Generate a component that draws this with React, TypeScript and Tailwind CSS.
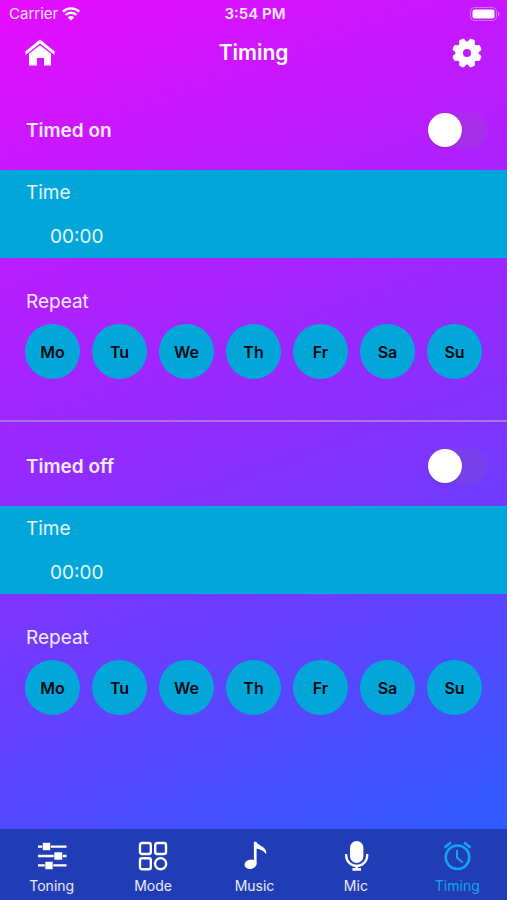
import React, { useState } from 'react';

const DAYS = ['Mo', 'Tu', 'We', 'Th', 'Fr', 'Sa', 'Su'];

const WifiIcon = () => (
  <svg width="18" height="14" viewBox="0 0 18 14" fill="none" stroke="#fff" strokeWidth="2.4" aria-hidden="true">
    <path d="M0.8 4.7a11.8 11.8 0 0 1 16.4 0" />
    <path d="M3.6 8a7.6 7.6 0 0 1 10.8 0" />
    <path d="M9 13.6L5.9 10.4a4.5 4.5 0 0 1 6.2 0z" fill="#fff" stroke="none" />
  </svg>
);

const BatteryIcon = () => (
  <svg width="31" height="14" viewBox="0 0 31 14" aria-hidden="true">
    <rect x="0.5" y="0.5" width="26" height="13" rx="4" fill="none" stroke="#fff" strokeOpacity="0.35" />
    <rect x="2.5" y="2.5" width="22" height="9" rx="2.2" fill="#fff" />
    <path d="M28.2 4.8c1.6.6 1.6 3.8 0 4.4z" fill="#fff" fillOpacity="0.5" />
  </svg>
);

const HomeIcon = () => (
  <svg width="30" height="28" viewBox="0 0 30 28" fill="currentColor" aria-hidden="true">
    <path d="M15 0.5L29.5 12.2V16L15 4.6L0.5 16V12.2z" />
    <path d="M15 6.2L26 14.8V26.5H19V19H12V26.5H4V14.8z" />
  </svg>
);

const GearIcon = () => (
  <svg width="30" height="30" viewBox="-15 -15 30 30" aria-hidden="true">
    <defs>
      <mask id="gear-hole">
        <rect x="-15" y="-15" width="30" height="30" fill="#fff" />
        <circle r="4" fill="#000" />
      </mask>
    </defs>
    <g fill="#fff" mask="url(#gear-hole)">
      <circle r="11.6" />
      {[22.5, 67.5, 112.5, 157.5, 202.5, 247.5, 292.5, 337.5].map((angle) => (
        <path key={angle} transform={`rotate(${angle})`} d="M-4 -10L-2.8 -14Q-2.3 -15 -1 -14.8H1Q2.3 -15 2.8 -14L4 -10z" />
      ))}
    </g>
  </svg>
);

const ToningIcon = () => (
  <svg width="30" height="30" viewBox="0 0 30 30" fill="#fff" aria-hidden="true">
    <path d="M1 4.4h28.5v2.4H1zM1 13.8h28.5v2.4H1zM1 23.2h28.5v2.4H1z" />
    <path d="M5.5 1.5h8v8h-8zM17 11h8.5v8H17zM8 20.4h8v8H8z" stroke="#213db6" strokeWidth="0.6" />
  </svg>
);

const ModeIcon = () => (
  <svg width="30" height="30" viewBox="0 0 30 30" fill="none" stroke="#fff" strokeWidth="2.4" aria-hidden="true">
    <rect x="2" y="2" width="10.8" height="11" rx="2" />
    <rect x="17.2" y="2" width="10.8" height="11" rx="2" />
    <rect x="2" y="17.2" width="10.8" height="11" rx="2" />
    <circle cx="22.6" cy="22.7" r="5.6" />
  </svg>
);

const MusicIcon = () => (
  <svg width="30" height="30" viewBox="0 0 30 30" fill="#fff" aria-hidden="true">
    <ellipse cx="11.5" cy="23.3" rx="6" ry="4.7" transform="rotate(-10 11.5 23.3)" />
    <path d="M14.9 0.8H17.4C18 4.2 27 5.5 27.4 11.5L26.8 13C25 9.8 20.8 8.2 17.6 7.6V23.5H14.9z" />
  </svg>
);

const MicIcon = () => (
  <svg width="30" height="30" viewBox="0 0 30 30" fill="none" stroke="#fff" aria-hidden="true">
    <rect x="9" y="0" width="13.4" height="22" rx="6.7" fill="#fff" stroke="none" />
    <path d="M5.2 13v1.5a10.5 10.5 0 0 0 21 0V13" strokeWidth="2.3" />
    <path d="M15.7 25v3M11.5 28.4h8.5" strokeWidth="2.6" />
  </svg>
);

const TimingIcon = () => (
  <svg width="30" height="30" viewBox="0 0 30 30" fill="none" stroke="currentColor" aria-hidden="true">
    <circle cx="15.5" cy="16.3" r="11.8" strokeWidth="2.5" />
    <path d="M15 9v7.8l5.8 4.7" strokeWidth="2" />
    <path d="M2.5 6.5L9 1.5M22 1.5L28.5 6.5" strokeWidth="2.8" />
  </svg>
);

const TABS = [
  { label: 'Toning', Icon: ToningIcon },
  { label: 'Mode', Icon: ModeIcon },
  { label: 'Music', Icon: MusicIcon },
  { label: 'Mic', Icon: MicIcon },
  { label: 'Timing', Icon: TimingIcon },
];

const TimerSection = ({ title }: { title: string }) => {
  const [enabled, setEnabled] = useState(false);
  const [days, setDays] = useState<string[]>([]);

  const toggleDay = (day: string) =>
    setDays((prev) => (prev.includes(day) ? prev.filter((d) => d !== day) : [...prev, day]));

  return (
    <section aria-label={title}>
      <label className="flex h-[84px] cursor-pointer items-center justify-between pt-1 pr-[19px] pl-[26px]">
        <span className="pt-0.5 text-[19px] font-semibold">{title}</span>
        <input
          type="checkbox"
          role="switch"
          checked={enabled}
          onChange={(e) => setEnabled(e.target.checked)}
          className="flex h-9 w-[60px] cursor-pointer appearance-none items-center rounded-full bg-[#787880]/15 before:size-[34px] before:rounded-full before:bg-white before:shadow-sm checked:justify-end checked:bg-[#03a6d9]"
        />
      </label>
      <div className="h-[88px] bg-[#03a6d9]">
        <h3 className="flex h-11 items-center pt-0.5 pl-[26px] text-[19px]">Time</h3>
        <button type="button" aria-label={`${title} time 00:00`} className="flex h-11 items-center pt-0.5 pl-[50px] text-[19px]">
          00:00
        </button>
      </div>
      <div className="px-[25px] pt-[29px] pb-[41px]">
        <h3 className="pl-px text-[19px] leading-[30px]">Repeat</h3>
        <div className="mt-[7px] flex justify-between">
          {DAYS.map((day) => (
            <button
              key={day}
              type="button"
              aria-pressed={days.includes(day)}
              onClick={() => toggleDay(day)}
              className="size-[55px] rounded-full bg-[#03a6d9] text-[16px] font-semibold text-[#020a12] aria-pressed:bg-white"
            >
              {day}
            </button>
          ))}
        </div>
      </div>
    </section>
  );
};

export default function App() {
  const [tab, setTab] = useState('Timing');

  return (
    <div className="flex min-h-screen flex-col bg-linear-[160deg,#e60cff_0%,#8a2eff_50%,#1f62ff_100%] font-['Inter','Liberation_Sans',sans-serif] text-white/90">
      <div className="grid h-7 grid-cols-3 items-center pr-1.5 pl-[9px] text-[15px]">
        <div className="flex items-center gap-1">
          Carrier
          <WifiIcon />
        </div>
        <div className="text-center font-semibold">3:54 PM</div>
        <div className="flex justify-end">
          <BatteryIcon />
        </div>
      </div>
      <header className="flex h-[58px] items-start justify-between px-6 pt-[9px] text-white">
        <button type="button" aria-label="Home" className="flex size-8 items-center justify-center">
          <HomeIcon />
        </button>
        <h1 className="text-[21px] leading-8 font-semibold">Timing</h1>
        <button type="button" aria-label="Settings" className="flex size-8 items-center justify-center">
          <GearIcon />
        </button>
      </header>

      <main className="flex-1">
        <TimerSection title="Timed on" />
        <hr className="h-0.5 border-0 bg-[#a873dc]" />
        <TimerSection title="Timed off" />
      </main>

      <nav className="grid h-[71px] grid-cols-5 bg-[#213db6]">
        {TABS.map(({ label, Icon }) => (
          <button
            key={label}
            type="button"
            aria-current={tab === label ? 'page' : undefined}
            onClick={() => setTab(label)}
            className="flex flex-col items-center gap-1 pt-3 pl-0.5 text-[14px] leading-[22px] aria-[current=page]:text-[#12a5ee]"
          >
            <Icon />
            {label}
          </button>
        ))}
      </nav>
    </div>
  );
}
